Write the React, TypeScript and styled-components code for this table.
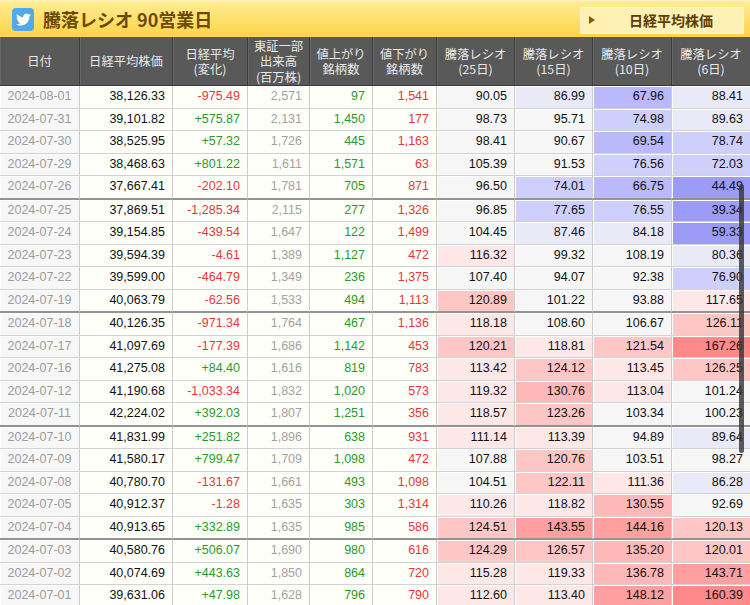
import React from "react";
import styled, { createGlobalStyle } from "styled-components";
import { FaTwitter } from "react-icons/fa";

const GlobalStyle = createGlobalStyle`
  html, body { margin: 0; padding: 0; background: #fff; }
  body { width: 750px; overflow: hidden; font-family: "Liberation Sans", "Noto Sans CJK JP", sans-serif; }
`;

type Row = [string, string, string, string, string, string, number, number, number, number];

const rows: Row[] = [
  ["2024-08-01", "38,126.33", "-975.49", "2,571", "97", "1,541", 90.05, 86.99, 67.96, 88.41],
  ["2024-07-31", "39,101.82", "+575.87", "2,131", "1,450", "177", 98.73, 95.71, 74.98, 89.63],
  ["2024-07-30", "38,525.95", "+57.32", "1,726", "445", "1,163", 98.41, 90.67, 69.54, 78.74],
  ["2024-07-29", "38,468.63", "+801.22", "1,611", "1,571", "63", 105.39, 91.53, 76.56, 72.03],
  ["2024-07-26", "37,667.41", "-202.10", "1,781", "705", "871", 96.5, 74.01, 66.75, 44.49],
  ["2024-07-25", "37,869.51", "-1,285.34", "2,115", "277", "1,326", 96.85, 77.65, 76.55, 39.34],
  ["2024-07-24", "39,154.85", "-439.54", "1,647", "122", "1,499", 104.45, 87.46, 84.18, 59.33],
  ["2024-07-23", "39,594.39", "-4.61", "1,389", "1,127", "472", 116.32, 99.32, 108.19, 80.36],
  ["2024-07-22", "39,599.00", "-464.79", "1,349", "236", "1,375", 107.4, 94.07, 92.38, 76.9],
  ["2024-07-19", "40,063.79", "-62.56", "1,533", "494", "1,113", 120.89, 101.22, 93.88, 117.65],
  ["2024-07-18", "40,126.35", "-971.34", "1,764", "467", "1,136", 118.18, 108.6, 106.67, 126.11],
  ["2024-07-17", "41,097.69", "-177.39", "1,686", "1,142", "453", 120.21, 118.81, 121.54, 167.26],
  ["2024-07-16", "41,275.08", "+84.40", "1,616", "819", "783", 113.42, 124.12, 113.45, 126.25],
  ["2024-07-12", "41,190.68", "-1,033.34", "1,832", "1,020", "573", 119.32, 130.76, 113.04, 101.24],
  ["2024-07-11", "42,224.02", "+392.03", "1,807", "1,251", "356", 118.57, 123.26, 103.34, 100.23],
  ["2024-07-10", "41,831.99", "+251.82", "1,896", "638", "931", 111.14, 113.39, 94.89, 89.64],
  ["2024-07-09", "41,580.17", "+799.47", "1,709", "1,098", "472", 107.88, 120.76, 103.51, 98.27],
  ["2024-07-08", "40,780.70", "-131.67", "1,661", "493", "1,098", 104.51, 122.11, 111.36, 86.28],
  ["2024-07-05", "40,912.37", "-1.28", "1,635", "303", "1,314", 110.26, 118.82, 130.55, 92.69],
  ["2024-07-04", "40,913.65", "+332.89", "1,635", "985", "586", 124.51, 143.55, 144.16, 120.13],
  ["2024-07-03", "40,580.76", "+506.07", "1,690", "980", "616", 124.29, 126.57, 135.2, 120.01],
  ["2024-07-02", "40,074.69", "+443.63", "1,850", "864", "720", 115.28, 119.33, 136.78, 143.71],
  ["2024-07-01", "39,631.06", "+47.98", "1,628", "796", "790", 112.6, 113.4, 148.12, 160.39],
];

const weekEnds = new Set(["2024-07-26", "2024-07-19", "2024-07-11", "2024-07-04"]);

const colWidths = [80, 93, 75, 62, 63, 64, 78, 78, 79, 78];

function ratioColor(v: number): string {
  if (v >= 160) return "#ff8a8a";
  if (v >= 150) return "#ff9595";
  if (v >= 140) return "#ff9f9f";
  if (v >= 130) return "#ffb8b8";
  if (v >= 120) return "#ffc6c6";
  if (v >= 110) return "#fde7e7";
  if (v > 90) return "#f6f6f6";
  if (v >= 80) return "#e9e9f8";
  if (v >= 70) return "#cfcffc";
  if (v >= 60) return "#b9b9fb";
  return "#9c9cf6";
}

const Page = styled.div`
  position: relative;
  width: 750px;
`;

const TitleBar = styled.header`
  height: 37px;
  box-sizing: border-box;
  display: flex;
  align-items: center;
  padding: 0 6px 0 12px;
  background: linear-gradient(#ffec95, #fdd447);
  border-top: 1px solid #fff4c4;
`;

const TwitterBox = styled.div`
  width: 22px;
  height: 23px;
  border-radius: 4px;
  background: #51aae8;
  display: flex;
  align-items: center;
  justify-content: center;
  color: #fff;
  flex-shrink: 0;
`;

const Title = styled.h1`
  margin: 0 0 0 9px;
  font-family: "Noto Sans CJK JP", sans-serif;
  font-size: 18px;
  font-weight: 700;
  color: #6b4a08;
  flex: 1;
  line-height: 1;
`;

const NavButton = styled.div`
  width: 164px;
  height: 27px;
  box-sizing: border-box;
  display: flex;
  align-items: center;
  padding-left: 8px;
  background: #fff1b4;
  border: 1px solid #fff7d4;
  margin-top: 2px;
`;

const Triangle = styled.span`
  width: 0;
  height: 0;
  border-top: 4.5px solid transparent;
  border-bottom: 4.5px solid transparent;
  border-left: 6px solid #8a5a00;
`;

const NavLabel = styled.span`
  flex: 1;
  text-align: center;
  padding-left: 4px;
  font-family: "Noto Sans CJK JP", sans-serif;
  font-size: 14px;
  font-weight: 700;
  color: #5a3e00;
`;

const Table = styled.table`
  width: 750px;
  table-layout: fixed;
  border-collapse: separate;
  border-spacing: 0;
`;

const HeadCell = styled.th`
  height: 49px;
  box-sizing: border-box;
  padding: 2px 0 0;
  background: #595959;
  color: #e8e8e8;
  font-family: "Noto Sans CJK JP", sans-serif;
  font-weight: 400;
  font-size: 12.3px;
  line-height: 15.2px;
  text-align: center;
  vertical-align: middle;
  border-right: 1px solid #3d3d3d;
  border-bottom: 1px solid #3a3a3a;
  box-shadow: inset 1px 0 0 #686868;
  &:last-child { border-right: none; }
`;

const HeadLine = styled.span`
  display: block;
  white-space: nowrap;
`;

type Tone = "date" | "plain" | "red" | "green" | "muted";

const toneColor: Record<Tone, string> = {
  date: "#9b9b9b",
  plain: "#111",
  red: "#e8363a",
  green: "#2b9a2b",
  muted: "#a2a2a2",
};

const Cell = styled.td<{ $tone: Tone; $bg: string; $week: boolean; $center?: boolean }>`
  padding: ${(p) => (p.$center ? "0" : "0 7px 0 0")};
  line-height: 21.5px;
  font-size: 12.5px;
  font-family: "Liberation Sans", Arial, sans-serif;
  white-space: nowrap;
  overflow: hidden;
  color: ${(p) => toneColor[p.$tone]};
  background: ${(p) => p.$bg};
  text-align: ${(p) => (p.$center ? "center" : "right")};
  border-right: 1px solid #cdcdcd;
  border-bottom: ${(p) => (p.$week ? "2px solid #939393" : "1px solid #d2d2d2")};
  box-shadow: inset 1px 1px 0 #ffffff;
  &:last-child { border-right: none; }
`;

const ScrollThumb = styled.div`
  position: absolute;
  left: 739px;
  top: 184px;
  width: 5px;
  height: 269px;
  border-radius: 3px;
  background: rgba(55, 55, 55, 0.82);
`;

const headers: string[][] = [
  ["日付"],
  ["日経平均株価"],
  ["日経平均", "(変化)"],
  ["東証一部", "出来高", "(百万株)"],
  ["値上がり", "銘柄数"],
  ["値下がり", "銘柄数"],
  ["騰落レシオ", "(25日)"],
  ["騰落レシオ", "(15日)"],
  ["騰落レシオ", "(10日)"],
  ["騰落レシオ", "(6日)"],
];

export default function App() {
  return (
    <Page>
      <GlobalStyle />
      <TitleBar>
        <TwitterBox>
          <FaTwitter size={15} />
        </TwitterBox>
        <Title>騰落レシオ 90営業日</Title>
        <NavButton>
          <Triangle />
          <NavLabel>日経平均株価</NavLabel>
        </NavButton>
      </TitleBar>
      <Table>
        <colgroup>
          {colWidths.map((w, i) => (
            <col key={i} style={{ width: w }} />
          ))}
        </colgroup>
        <thead>
          <tr>
            {headers.map((h, i) => (
              <HeadCell key={i}>
                {h.map((line, j) => (
                  <HeadLine key={j}>{line}</HeadLine>
                ))}
              </HeadCell>
            ))}
          </tr>
        </thead>
        <tbody>
          {rows.map((r) => {
            const week = weekEnds.has(r[0]);
            const cream = "#fffffa";
            return (
              <tr key={r[0]}>
                <Cell $tone="date" $bg="#f7f7f7" $week={week} $center>{r[0]}</Cell>
                <Cell $tone="plain" $bg={cream} $week={week}>{r[1]}</Cell>
                <Cell $tone={r[2].startsWith("-") ? "red" : "green"} $bg={cream} $week={week}>{r[2]}</Cell>
                <Cell $tone="muted" $bg={cream} $week={week}>{r[3]}</Cell>
                <Cell $tone="green" $bg={cream} $week={week}>{r[4]}</Cell>
                <Cell $tone="red" $bg={cream} $week={week}>{r[5]}</Cell>
                {[r[6], r[7], r[8], r[9]].map((v, i) => (
                  <Cell key={i} $tone="plain" $bg={ratioColor(v)} $week={week}>
                    {v.toFixed(2)}
                  </Cell>
                ))}
              </tr>
            );
          })}
        </tbody>
      </Table>
      <ScrollThumb />
    </Page>
  );
}
